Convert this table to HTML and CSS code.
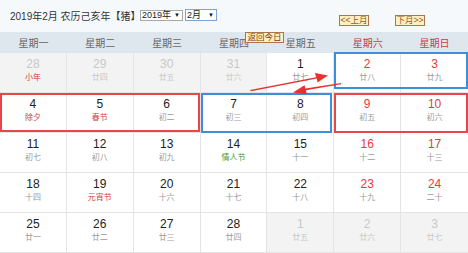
FILE: index.html
```html
<!DOCTYPE html>
<html lang="zh-CN">
<head>
<meta charset="utf-8">
<title>万年历</title>
<link rel="stylesheet" href="styles.css">
</head>
<body>
<div class="cal">
  <div class="topbar">
    <span class="title">2019年2月 农历己亥年【猪】</span>
    <span class="sel sel-year">2019年<i class="tri">▼</i></span>
    <span class="sel sel-month focus">2月<i class="tri">▼</i></span>
    <span class="btn btn-prev">&lt;&lt;上月</span>
    <span class="btn btn-next">下月&gt;&gt;</span>
  </div>
  <div class="grid">
    <div class="wk">星期一</div>
    <div class="wk">星期二</div>
    <div class="wk">星期三</div>
    <div class="wk">星期四</div>
    <div class="wk">星期五</div>
    <div class="wk we">星期六</div>
    <div class="wk we">星期日</div>

    <div class="day other"><b>28</b><span class="fest">小年</span></div>
    <div class="day other"><b>29</b><span>廿四</span></div>
    <div class="day other"><b>30</b><span>廿五</span></div>
    <div class="day other"><b>31</b><span>廿六</span></div>
    <div class="day"><b>1</b><span>廿七</span></div>
    <div class="day we"><b>2</b><span>廿八</span></div>
    <div class="day we"><b>3</b><span>廿九</span></div>

    <div class="day"><b>4</b><span class="fest">除夕</span></div>
    <div class="day"><b>5</b><span class="fest">春节</span></div>
    <div class="day"><b>6</b><span>初二</span></div>
    <div class="day"><b>7</b><span>初三</span></div>
    <div class="day"><b>8</b><span>初四</span></div>
    <div class="day we"><b>9</b><span>初五</span></div>
    <div class="day we"><b>10</b><span>初六</span></div>

    <div class="day"><b>11</b><span>初七</span></div>
    <div class="day"><b>12</b><span>初八</span></div>
    <div class="day"><b>13</b><span>初九</span></div>
    <div class="day"><b>14</b><span class="green">情人节</span></div>
    <div class="day"><b>15</b><span>十一</span></div>
    <div class="day we"><b>16</b><span>十二</span></div>
    <div class="day we"><b>17</b><span>十三</span></div>

    <div class="day"><b>18</b><span>十四</span></div>
    <div class="day"><b>19</b><span class="fest">元宵节</span></div>
    <div class="day"><b>20</b><span>十六</span></div>
    <div class="day"><b>21</b><span>十七</span></div>
    <div class="day"><b>22</b><span>十八</span></div>
    <div class="day we"><b>23</b><span>十九</span></div>
    <div class="day we"><b>24</b><span>二十</span></div>

    <div class="day"><b>25</b><span>廿一</span></div>
    <div class="day"><b>26</b><span>廿二</span></div>
    <div class="day"><b>27</b><span>廿三</span></div>
    <div class="day"><b>28</b><span>廿四</span></div>
    <div class="day other"><b>1</b><span>廿五</span></div>
    <div class="day other"><b>2</b><span>廿六</span></div>
    <div class="day other"><b>3</b><span>廿七</span></div>
  </div>

  <span class="btn btn-today">返回今日</span>

  <div class="mark blue mark-a"></div>
  <div class="mark red mark-b"></div>
  <div class="mark blue mark-c"></div>
  <div class="mark red mark-d"></div>

  <svg class="arrows" width="468" height="253" viewBox="0 0 468 253">
    <polygon fill="#e8322e" points="250,90 316,77.2 315,73 328,75.5 317.5,82.5 316.8,78.6 251,91.2"/>
    <polygon fill="#e8322e" points="341,84.2 306,90.2 306.6,94.2 293,92.5 304.5,85.2 305.4,88.6 341,83"/>
  </svg>
</div>
</body>
</html>
```

FILE: styles.css
```css
* { box-sizing: border-box; }
html, body { margin: 0; padding: 0; background: #ffffff; }
body {
  font-family: "Liberation Sans", "Noto Sans CJK SC", sans-serif;
}
.cal {
  position: relative;
  width: 468px;
  height: 253px;
  overflow: hidden;
}
.topbar {
  height: 32px;
  background: #f6f9fc;
  display: flex;
  align-items: center;
  padding-left: 10px;
}
.title {
  font-size: 10px;
  color: #333;
  margin-top: -2px;
  width: 130px;
  white-space: nowrap;
}
.sel {
  display: inline-flex;
  align-items: center;
  justify-content: space-between;
  height: 11px;
  padding: 0 2px 0 1px;
  background: #fff;
  border: 1px solid #a8a8a8;
  font-size: 9px;
  line-height: 9px;
  color: #222;
  margin-top: -2px;
}
.sel-year { width: 43px; }
.sel-month { width: 32px; margin-left: 2px; height: 12px; }
.sel.focus { border-color: #7aa3d6; }
.tri { font-style: normal; font-size: 6px; color: #111; }
.btn {
  display: inline-flex;
  align-items: center;
  justify-content: center;
  height: 11px;
  padding: 0 2px;
  background: #fcf0c4;
  border: 1px solid #b0744a;
  color: #9a5a20;
  font-size: 8.5px;
  line-height: 9px;
  white-space: nowrap;
}
.btn-prev { width: 30px; margin-left: 122px; margin-top: 9px; }
.btn-next { width: 30px; margin-left: 26px; margin-top: 9px; }
.btn-today {
  position: absolute;
  left: 245px;
  top: 32px;
  width: 39px;
  height: 11px;
  color: #7a3c10;
}
.grid {
  display: grid;
  grid-template-columns: repeat(7, 1fr);
  grid-template-rows: 21px repeat(5, 40px);
}
.wk {
  background: #dfe7ee;
  color: #666;
  font-size: 10px;
  display: flex;
  align-items: center;
  justify-content: center;
}
.wk.we { color: #cc3a46; }
.day {
  border-right: 1px solid #e4e4e4;
  border-bottom: 1px solid #e4e4e4;
  display: flex;
  flex-direction: column;
  align-items: center;
  padding-top: 4px;
  background: #fff;
}
.day:nth-child(7n) { border-right: none; }
.day b {
  font-weight: normal;
  font-size: 12px;
  line-height: 14px;
  color: #222;
}
.day span {
  font-size: 8px;
  line-height: 12px;
  height: 12px;
  margin-top: 1px;
  color: #9a9a9a;
}
.day.we b { color: #e53a40; }
.day span.fest { color: #d04040; }
.day span.green { color: #3e9a3e; }
.day.other { background: #f3f3f3; }
.day.other b { color: #c8c8c8; }
.day.other span { color: #c8c8c8; }
.day.other span.fest { color: #d04040; }

.mark {
  position: absolute;
  border: 2px solid;
}
.mark.blue { border-color: #3d8fdc; }
.mark.red { border-color: #e8464a; }
.mark-a { left: 334px; top: 52px; width: 134px; height: 37px; }
.mark-b { left: 0; top: 93px; width: 200px; height: 39px; }
.mark-c { left: 201px; top: 93px; width: 131px; height: 40px; }
.mark-d { left: 334px; top: 93px; width: 134px; height: 40px; }

.arrows {
  position: absolute;
  left: 0;
  top: 0;
  pointer-events: none;
}
```
